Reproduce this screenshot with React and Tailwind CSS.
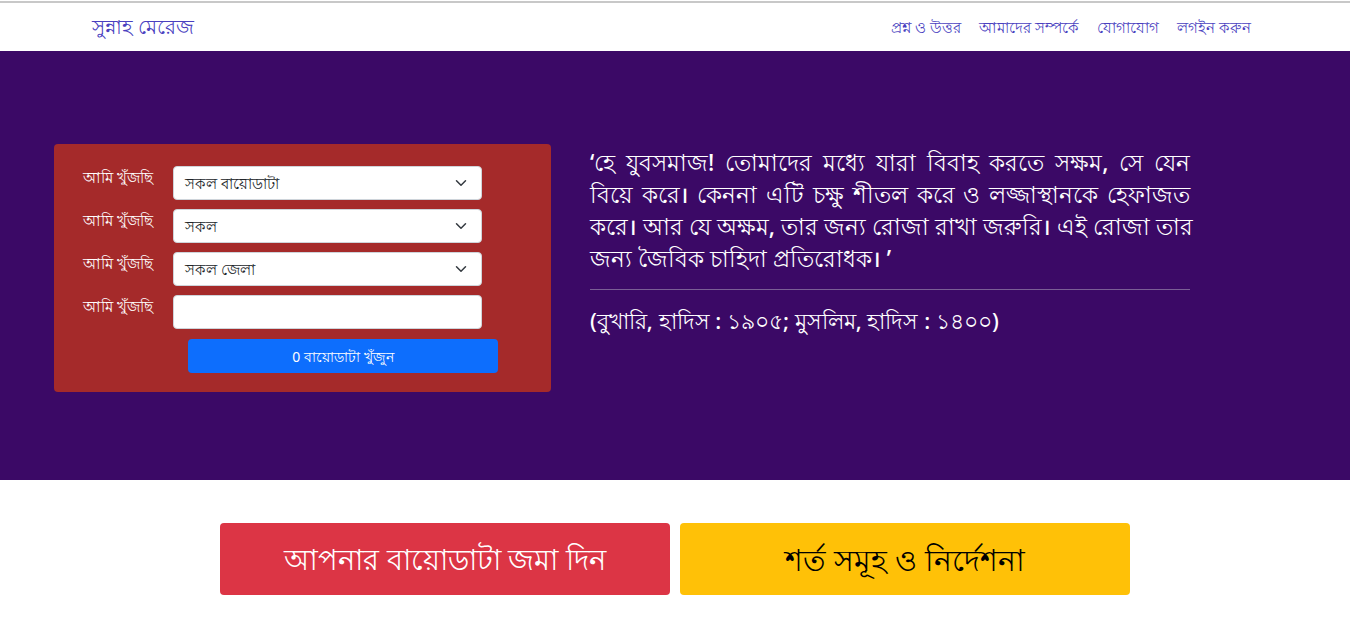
import React from 'react';

const fields = [
  { kind: 'select', value: 'সকল বায়োডাটা' },
  { kind: 'select', value: 'সকল' },
  { kind: 'select', value: 'সকল জেলা' },
  { kind: 'input', value: '' },
];

const quoteLines = [
  '‘হে যুবসমাজ! তোমাদের মধ্যে যারা বিবাহ করতে সক্ষম, সে যেন',
  'বিয়ে করে। কেননা এটি চক্ষু শীতল করে ও লজ্জাস্থানকে হেফাজত',
  'করে। আর যে অক্ষম, তার জন্য রোজা রাখা জরুরি। এই রোজা তার',
  'জন্য জৈবিক চাহিদা প্রতিরোধক। ’',
];

function Chevron() {
  return (
    <svg width="12" height="12" viewBox="0 0 16 16" fill="none" stroke="#343a40" strokeWidth="2" strokeLinecap="round" strokeLinejoin="round">
      <path d="M2 5l6 6 6-6" />
    </svg>
  );
}

export default function App() {
  return (
    <div className="min-h-screen bg-white" style={{ fontFamily: '"Noto Sans", "Liberation Sans", sans-serif' }}>
      {/* navbar */}
      <div className="border-t-2 border-[#c8c8c8] mt-[1px] h-[50px] flex items-center justify-between pl-[92px] pr-[99px]">
        <a className="text-[20px] text-[#4a3fbf]">সুন্নাহ মেরেজ</a>
        <div className="flex gap-[18px] text-[15px] text-[#4a3fbf]">
          <a>প্রশ্ন ও উত্তর</a>
          <a>আমাদের সম্পর্কে</a>
          <a>যোগাযোগ</a>
          <a>লগইন করুন</a>
        </div>
      </div>

      {/* hero */}
      <div className="bg-[#3b0966] h-[429px] flex items-start pt-[93px] pl-[54px]">
        <div className="w-[497px] h-[248px] bg-[#a52a2a] rounded pt-[22px] pl-[29px]">
          <div className="flex flex-col gap-[9px]">
            {fields.map((f, i) => (
              <div key={i} className="flex items-start">
                <label className="w-[90px] text-[15px] text-white leading-[22px]">আমি খুঁজছি</label>
                <div className="w-[309px] h-[34px] bg-white rounded border border-[#ced4da] flex items-center justify-between pl-[11px] pr-[14px] text-[15px] text-[#212529]">
                  <span>{f.value}</span>
                  {f.kind === 'select' && <Chevron />}
                </div>
              </div>
            ))}
          </div>
          <button className="ml-[105px] mt-[10px] w-[310px] h-[34px] bg-[#0d6efd] text-white text-[14px] rounded">
            0 বায়োডাটা খুঁজুন
          </button>
        </div>
        <div className="ml-[39px] w-[600px] text-white">
          <div className="text-[23px] leading-[32px] pt-[2px] font-medium">
            {quoteLines.map((l, i) => (
              <span
                key={i}
                className={i < quoteLines.length - 1 ? 'block whitespace-nowrap text-justify [text-align-last:justify]' : 'block'}
              >
                {l}
              </span>
            ))}
          </div>
          <div className="h-px bg-[#7a5e95] mt-[15px] mb-[14px]" />
          <p className="text-[22px] leading-[32px] font-medium">(বুখারি, হাদিস : ১৯০৫; মুসলিম, হাদিস : ১৪০০)</p>
        </div>
      </div>

      {/* action buttons */}
      <div className="flex justify-center gap-[10px] pt-[43px]">
        <button className="w-[450px] h-[72px] bg-[#dc3545] text-white text-[29px] rounded">আপনার বায়োডাটা জমা দিন</button>
        <button className="w-[450px] h-[72px] bg-[#ffc107] text-black text-[30px] rounded">শর্ত সমূহ ও নির্দেশনা</button>
      </div>
    </div>
  );
}
